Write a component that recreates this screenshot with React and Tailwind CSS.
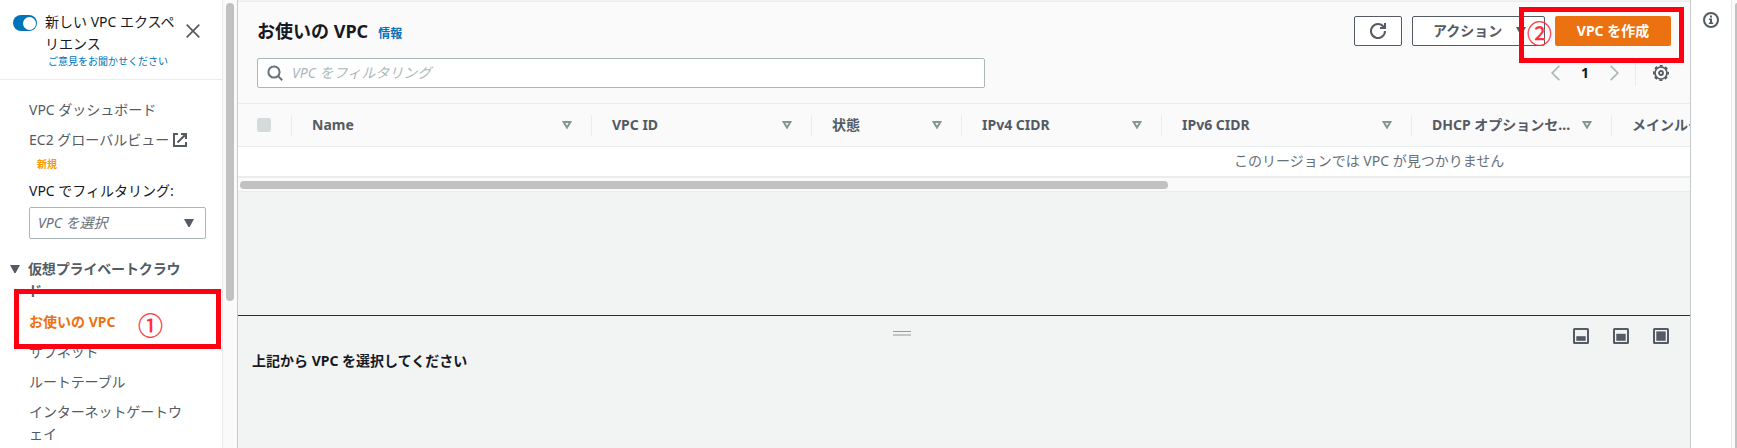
const columns = [
  { label: 'Name', width: 'w-[300px]' },
  { label: 'VPC ID', width: 'w-[220px]' },
  { label: '状態', width: 'w-[150px]' },
  { label: 'IPv4 CIDR', width: 'w-[200px]' },
  { label: 'IPv6 CIDR', width: 'w-[250px]' },
  { label: 'DHCP オプションセ...', width: 'w-[200px]' },
  { label: 'メインルー', width: 'w-[250px]' },
];

function Caret({ className }) {
  return (
    <svg className={className} width="10" height="8" viewBox="0 0 10 8">
      <path d="M0 0h10L5.6 8H4.4z" fill="currentColor" />
    </svg>
  );
}

function SortIcon() {
  return (
    <svg className="shrink-0 text-[#879596]" width="10" height="8" viewBox="0 0 10 8" fill="none" stroke="currentColor" strokeWidth="2">
      <path d="M1.6 1h6.8L5 6.6z" />
    </svg>
  );
}

function ExternalIcon() {
  return (
    <svg className="-ml-px" width="16" height="16" viewBox="0 0 16 16" fill="none" stroke="currentColor" strokeWidth="2">
      <path d="M6 2H2v12h12v-4M9 2h5v5M14 2L5.5 10.5" />
    </svg>
  );
}

function RefreshIcon() {
  return (
    <svg width="16" height="16" viewBox="0 0 16 16" fill="none" stroke="currentColor" strokeWidth="2">
      <path d="M10 5h5V0M15 8a7 7 0 1 1-1.5-4.3L14.6 5" />
    </svg>
  );
}

function SearchIcon() {
  return (
    <svg className="shrink-0 text-[#687078]" width="16" height="16" viewBox="0 0 16 16" fill="none" stroke="currentColor" strokeWidth="2">
      <circle cx="7" cy="7" r="5.6" />
      <path d="M10.9 10.9L15.2 15.2" />
    </svg>
  );
}

function GearIcon() {
  return (
    <svg width="16" height="16" viewBox="0 0 16 16" fill="none" stroke="currentColor">
      <circle cx="8" cy="8" r="2" strokeWidth="1.8" />
      <circle cx="8" cy="8" r="6" strokeWidth="1.7" />
      <circle cx="8" cy="8" r="7.2" strokeWidth="1.7" strokeDasharray="3.1 2.555" strokeDashoffset="1.55" />
    </svg>
  );
}

function InfoIcon() {
  return (
    <svg className="text-[#545b64]" width="16" height="16" viewBox="0 0 16 16" fill="none" stroke="currentColor" strokeWidth="2">
      <circle cx="8" cy="8" r="7" />
      <path d="M7 3.6h2v1.8H7zM6 6.4h3v4h1.2V12H5.8v-1.6H7V8H6z" fill="currentColor" stroke="none" />
    </svg>
  );
}

function PanelIcon({ level }) {
  return (
    <svg width="16" height="16" viewBox="0 0 16 16">
      <rect x="1" y="1" width="14" height="14" rx="0.5" fill="none" stroke="currentColor" strokeWidth="2" />
      <rect x="3.3" y={12.8 - level} width="9.4" height={level} fill="currentColor" />
    </svg>
  );
}

function Sidebar() {
  return (
    <aside className="w-[223px] shrink-0 overflow-hidden border-r border-[#eaeaea] bg-white text-[#545b64]">
      <div className="flex h-20 border-b border-[#eaeded] pl-[13px] pt-[11px]">
        <div className="mt-1 flex h-4 w-6 shrink-0 items-center justify-end rounded-full bg-[#0073bb] pr-px">
          <div className="size-[13px] rounded-full bg-white" />
        </div>
        <div className="ml-2 w-[136px] text-[#16191f]">
          <div className="whitespace-nowrap">新しい VPC エクスペ</div>
          <div>リエンス</div>
          <div className="pl-[3px] text-[10px] leading-3 text-[#0073bb]">ご意見をお聞かせください</div>
        </div>
        <svg className="ml-[5px] mt-[13px] text-[#545b64]" width="14" height="14" viewBox="0 0 14 14" stroke="currentColor" strokeWidth="1.7">
          <path d="M0.7 0.7l12.6 12.6M13.3 0.7L0.7 13.3" />
        </svg>
      </div>
      <nav className="pl-[29px] pt-[19px]">
        <div>VPC ダッシュボード</div>
        <div className="mt-2 flex items-center gap-1 whitespace-nowrap">
          EC2 グローバルビュー <ExternalIcon />
        </div>
        <div className="flex h-[29px] items-center pb-[3px] pl-2 text-[10px] font-bold text-[#ff9900]">新規</div>
        <div className="text-[#16191f]">VPC でフィルタリング:</div>
        <div className="mt-[5px] flex h-8 w-[177px] items-center justify-between rounded-[2px] border border-[#aab7b8] px-2 pr-[11px] text-[#687078]">
          <span className="italic">VPC を選択</span>
          <Caret className="text-[#545b64]" />
        </div>
        <div className="-ml-[19px] mt-[19px] flex font-bold">
          <Caret className="mr-2 mt-[7px] shrink-0" />
          <div className="w-[154px] break-all tracking-[-0.15px]">仮想プライベートクラウド</div>
        </div>
        <div className="mt-[9px] flex w-[154px] flex-col gap-2 break-all tracking-[-0.1px]">
          <div className="font-bold tracking-normal text-[#ec7211]">お使いの VPC</div>
          <div>サブネット</div>
          <div>ルートテーブル</div>
          <div>インターネットゲートウェイ</div>
        </div>
      </nav>
    </aside>
  );
}

function Toolbar() {
  return (
    <div className="flex h-[102px] justify-between border-b border-[#eaeded] pl-[19px] pr-[19px] pt-3.5">
      <div>
        <div className="flex h-[30px] items-baseline gap-2.5 font-bold leading-[30px]">
          <h1 className="text-[18px] text-[#16191f]">お使いの VPC</h1>
          <span className="text-[12px] text-[#0073bb]">情報</span>
        </div>
        <div className="mt-3 flex h-[30px] w-[728px] items-center gap-2 rounded-[2px] border border-[#aab7b8] bg-white pl-[9px] italic text-[#aab7b8]">
          <SearchIcon />
          <span className="pl-px">VPC をフィルタリング</span>
        </div>
      </div>
      <div className="flex flex-col items-end text-[#545b64]">
        <div className="flex gap-2.5 font-bold">
          <div className="flex h-[30px] w-12 items-center justify-center rounded-[2px] border border-[#545b64] bg-white">
            <RefreshIcon />
          </div>
          <div className="flex h-[30px] w-[133px] items-center justify-between rounded-[2px] border border-[#545b64] bg-white pl-5 pr-[18px]">
            アクション
            <Caret />
          </div>
          <div className="flex h-[30px] w-[116px] items-center justify-center rounded-[2px] bg-[#ec7211] text-white">VPC を作成</div>
        </div>
        <div className="mt-3.5 flex h-[26px] items-center pr-0.5">
          <svg width="9" height="16" viewBox="0 0 9 16" fill="none" stroke="#aab7b8" strokeWidth="1.7">
            <path d="M8.3 0.8L1.2 8l7.1 7.2" />
          </svg>
          <span className="w-[50px] text-center font-bold text-[#16191f]">1</span>
          <svg width="9" height="16" viewBox="0 0 9 16" fill="none" stroke="#aab7b8" strokeWidth="1.7">
            <path d="M0.7 0.8L7.8 8l-7.1 7.2" />
          </svg>
          <div className="ml-4 mr-[17px] h-[26px] w-px bg-[#eaeded]" />
          <GearIcon />
        </div>
      </div>
    </div>
  );
}

function VpcTable() {
  return (
    <div>
      <div className="flex h-[43px] items-center overflow-hidden border-b border-[#eaeded] font-bold text-[#545b64]">
        <div className="w-[53px] shrink-0 pl-[19px]">
          <div className="size-3.5 rounded-[2px] bg-[#d5dbdb]" />
        </div>
        {columns.map((column) => (
          <div
            key={column.label}
            className={`flex h-[21px] shrink-0 items-center justify-between border-l border-[#eaeded] pl-5 pr-[19px] ${column.width}`}
          >
            <span className="whitespace-nowrap">{column.label}</span>
            <SortIcon />
          </div>
        ))}
      </div>
      <div className="flex h-[31px] border-b-2 border-[#eaeded] bg-white pl-[996px] pt-[3px] text-[#687078]">
        このリージョンでは VPC が見つかりません
      </div>
      <div className="flex h-3.5 items-center border-b border-[#eaeded] bg-[#fafafa] pl-0.5">
        <div className="h-2 w-[928px] rounded-full bg-[#c1c1c1]" />
      </div>
    </div>
  );
}

function DetailPanel() {
  return (
    <section className="relative flex-1 border-t border-[#232f3e] pl-3.5 pt-[34px]">
      <h2 className="font-bold text-[#16191f]">上記から VPC を選択してください</h2>
      <div className="absolute left-[655px] top-[15px] h-[5px] w-[18px] border-t border-b-2 border-t-[#999999] border-b-[#c4c6c6]" />
      <div className="absolute right-[21px] top-3 flex gap-6 text-[#545b64]">
        <PanelIcon level={4.6} />
        <PanelIcon level={7} />
        <PanelIcon level={9.4} />
      </div>
    </section>
  );
}

export default function App() {
  return (
    <div className="relative flex h-[448px] w-[1737px] overflow-hidden bg-white font-['Noto_Sans','Noto_Sans_CJK_JP',sans-serif] text-[14px] leading-[22px]" lang="ja">
      <Sidebar />
      <div className="flex w-3.5 shrink-0 justify-center bg-[#fafafa] pt-[3px]">
        <div className="h-[298px] w-2 rounded-full bg-[#c1c1c1]" />
      </div>
      <main className="flex w-[1454px] shrink-0 flex-col border-x border-[#c5cbcb] bg-[#f2f3f3] pt-px">
        <div className="border-t border-[#eaeded] bg-[#fafafa]">
          <Toolbar />
          <VpcTable />
        </div>
        <div className="h-[123px]" />
        <DetailPanel />
      </main>
      <div className="flex w-10 shrink-0 justify-center pt-3">
        <InfoIcon />
      </div>
      <div className="flex flex-1 justify-end border-l border-[#eaeaea] bg-[#fafafa] pt-[3px]">
        <div className="w-[2px] rounded-tl-full bg-[#c1c1c1]" />
      </div>

      <div className="absolute left-[14px] top-[289px] h-[60px] w-[207px] border-[5px] border-[#ff0012]" />
      <div className="absolute left-[138px] top-[313px] text-[25px] leading-6 text-[#ff2a35] [-webkit-text-stroke:0.3px_#ff2a35]">①</div>
      <div className="absolute left-[1519px] top-[7px] h-[56px] w-[165px] border-[5px] border-[#ff0012]" />
      <div className="absolute left-[1527px] top-[21px] text-[25px] leading-6 text-[#ff2a35] [-webkit-text-stroke:0.3px_#ff2a35]">②</div>
    </div>
  );
}
